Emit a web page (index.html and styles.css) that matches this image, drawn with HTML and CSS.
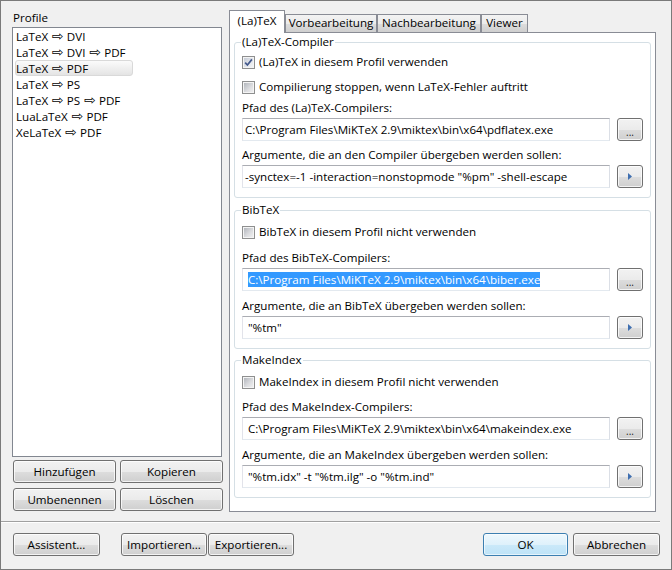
FILE: index.html
```html
<!DOCTYPE html>
<html lang="de">
<head>
<meta charset="utf-8">
<title>Profile</title>
<link rel="stylesheet" href="styles.css">
</head>
<body>
<div class="window">
  <div class="main">
    <div class="left">
      <div class="profile-label">Profile</div>
      <div class="listbox">
        <div class="list">
          <div class="item">LaTeX <span class="arr">⇨</span> DVI</div>
          <div class="item">LaTeX <span class="arr">⇨</span> DVI <span class="arr">⇨</span> PDF</div>
          <div class="item sel">LaTeX <span class="arr">⇨</span> PDF</div>
          <div class="item">LaTeX <span class="arr">⇨</span> PS</div>
          <div class="item">LaTeX <span class="arr">⇨</span> PS <span class="arr">⇨</span> PDF</div>
          <div class="item">LuaLaTeX <span class="arr">⇨</span> PDF</div>
          <div class="item">XeLaTeX <span class="arr">⇨</span> PDF</div>
        </div>
      </div>
      <div class="btngrid">
        <button class="btn">Hinzufügen</button>
        <button class="btn">Kopieren</button>
        <button class="btn">Umbenennen</button>
        <button class="btn">Löschen</button>
      </div>
    </div>
    <div class="tabwidget">
      <div class="tabbar">
        <div class="tab active t1">(La)TeX</div>
        <div class="tab t2">Vorbearbeitung</div>
        <div class="tab t3">Nachbearbeitung</div>
        <div class="tab t4">Viewer</div>
      </div>
      <div class="pane">
        <fieldset class="group g1">
          <legend>(La)TeX-Compiler</legend>
          <div class="cbrow first"><span class="cb checked"><svg viewBox="0 0 9 9" width="9" height="9"><path d="M1.2 4.6 L3.4 7 L7.9 1.4" fill="none" stroke="#43598c" stroke-width="1.7"/></svg></span>(La)TeX in diesem Profil verwenden</div>
          <div class="cbrow second"><span class="cb"></span>Compilierung stoppen, wenn LaTeX-Fehler auftritt</div>
          <div class="lbl l1">Pfad des (La)TeX-Compilers:</div>
          <div class="row"><div class="input tight">C:\Program Files\MiKTeX 2.9\miktex\bin\x64\pdflatex.exe</div><button class="btn sbtn"><span class="dots">...</span></button></div>
          <div class="lbl l2">Argumente, die an den Compiler übergeben werden sollen:</div>
          <div class="row"><div class="input tight">-synctex=-1 -interaction=nonstopmode "%pm" -shell-escape</div><button class="btn sbtn"><svg viewBox="0 0 4 7" width="4" height="7"><polygon points="0,0 4,3.5 0,7" fill="#3f6fb0"/></svg></button></div>
        </fieldset>
        <fieldset class="group g2">
          <legend>BibTeX</legend>
          <div class="cbrow first"><span class="cb"></span>BibTeX in diesem Profil nicht verwenden</div>
          <div class="lbl l1">Pfad des BibTeX-Compilers:</div>
          <div class="row"><div class="input"><span class="selected">C:\Program Files\MiKTeX 2.9\miktex\bin\x64\biber.exe</span></div><button class="btn sbtn"><span class="dots">...</span></button></div>
          <div class="lbl l2">Argumente, die an BibTeX übergeben werden sollen:</div>
          <div class="row"><div class="input">"%tm"</div><button class="btn sbtn"><svg viewBox="0 0 4 7" width="4" height="7"><polygon points="0,0 4,3.5 0,7" fill="#3f6fb0"/></svg></button></div>
        </fieldset>
        <fieldset class="group g3">
          <legend>MakeIndex</legend>
          <div class="cbrow first"><span class="cb"></span>MakeIndex in diesem Profil nicht verwenden</div>
          <div class="lbl l1">Pfad des MakeIndex-Compilers:</div>
          <div class="row"><div class="input">C:\Program Files\MiKTeX 2.9\miktex\bin\x64\makeindex.exe</div><button class="btn sbtn"><span class="dots">...</span></button></div>
          <div class="lbl l2">Argumente, die an MakeIndex übergeben werden sollen:</div>
          <div class="row"><div class="input">"%tm.idx" -t "%tm.ilg" -o "%tm.ind"</div><button class="btn sbtn"><svg viewBox="0 0 4 7" width="4" height="7"><polygon points="0,0 4,3.5 0,7" fill="#3f6fb0"/></svg></button></div>
        </fieldset>
      </div>
    </div>
  </div>
  <div class="sep"></div>
  <div class="footer">
    <button class="btn fb w87">Assistent...</button>
    <button class="btn fb w86 gapl">Importieren...</button>
    <button class="btn fb w86 gap1">Exportieren...</button>
    <div class="spacer"></div>
    <button class="btn fb w85 default">OK</button>
    <button class="btn fb w87 gap5">Abbrechen</button>
  </div>
</div>
</body>
</html>
```

FILE: styles.css
```css
* { box-sizing: border-box; }
html, body { margin: 0; padding: 0; }
body {
  width: 672px;
  height: 570px;
  overflow: hidden;
  background: #f0f0f0;
  font-family: "Open Sans", "DejaVu Sans", sans-serif;
  font-size: 11.6px;
  color: #000;
}
.window {
  width: 672px;
  height: 570px;
  border: 1px solid #7a7a7a;
  display: flex;
  flex-direction: column;
  background: #f0f0f0;
}
.main {
  height: 520px;
  display: flex;
  padding: 9px 0 9px 11px;
}
.left {
  width: 211px;
  display: flex;
  flex-direction: column;
}
.profile-label {
  height: 15px;
  line-height: 15px;
  margin-bottom: 2px;
  padding-left: 1px;
}
.listbox {
  flex: 1;
  width: 210px;
  background: #fff;
  border: 1px solid #828790;
  padding: 0 0 0 2px;
}
.list {
  display: inline-flex;
  flex-direction: column;
}
.item {
  height: 16px;
  line-height: 14px;
  border: 1px solid transparent;
  padding: 0 6px 0 0;
  white-space: nowrap;
}
.item.sel {
  border-color: #d9d9d9;
  border-radius: 3px;
  background: linear-gradient(#fbfbfb, #e4e4e4);
}
.arr {
  font-family: "DejaVu Sans", sans-serif;
  font-size: 14px;
  line-height: 14px;
  margin-left: 1px;
}
.btngrid {
  display: grid;
  grid-template-columns: 103px 103px;
  gap: 5px 4px;
  margin: 3px 0 1px 1px;
}
.btn {
  height: 23px;
  padding: 0;
  margin: 0;
  border: 1px solid #707070;
  border-radius: 3px;
  background: linear-gradient(#f2f2f2 0%, #ebebeb 50%, #dddddd 51%, #cfcfcf 100%);
  box-shadow: inset 0 0 0 1px rgba(255,255,255,0.75);
  font: inherit;
  color: #000;
  display: flex;
  align-items: center;
  justify-content: center;
}
.tabwidget {
  width: 427px;
  margin-left: 6px;
  display: flex;
  flex-direction: column;
}
.tabbar {
  height: 22px;
  display: flex;
  align-items: flex-end;
  position: relative;
  z-index: 1;
}
.tab {
  height: 18px;
  line-height: 16px;
  text-align: center;
  border: 1px solid #898c95;
  border-bottom: none;
  background: linear-gradient(#f3f3f3 0%, #ebebeb 50%, #dddddd 51%, #cfcfcf 100%);
}
.tab.active {
  height: 23px;
  margin-bottom: -1px;
  line-height: 20px;
  background: #fff;
}
.t1 { width: 56px; }
.t2 { width: 92px; }
.t3 { width: 104px; }
.t4 { width: 47px; }
.pane {
  flex: 1;
  background: #fff;
  border: 1px solid #898c95;
  padding: 1px 4px 0 4px;
}
.group {
  margin: 0;
  min-width: 0;
  border: 1px solid #d5dfe5;
  border-radius: 3px;
  padding: 0 7px 9px 7px;
}
.group legend {
  padding: 0 1px;
  margin-left: -1px;
  line-height: 16px;
}
.g2 { margin-top: 4px; }
.g3 { margin-top: 3px; }
.cbrow {
  height: 16px;
  line-height: 16px;
  display: flex;
  align-items: center;
  gap: 4px;
  white-space: nowrap;
}
.g1 .cbrow.first { margin-top: 4px; }
.g1 .cbrow.second { margin-top: 9px; }
.g2 .cbrow.first, .g3 .cbrow.first { margin-top: 6px; }
.cb {
  width: 13px;
  height: 13px;
  flex: none;
  border: 1px solid #8e8f8f;
  background: #f4f4f4;
  padding: 1px;
  position: relative;
}
.cb::before {
  content: "";
  display: block;
  width: 9px;
  height: 9px;
  background: linear-gradient(135deg, #b3b7bd 0%, #dcdde0 60%, #eeeeef 100%);
}
.cb.checked::before {
  background: linear-gradient(135deg, #c6ccd6 0%, #e4e7ec 60%, #f2f3f5 100%);
}
.cb svg {
  position: absolute;
  left: 1px;
  top: 1px;
}
.lbl {
  height: 16px;
  line-height: 16px;
  white-space: nowrap;
}
.g1 .l1 { margin-top: 5px; }
.g2 .l1 { margin-top: 10px; }
.g3 .l1 { margin-top: 9px; }
.g1 .l2 { margin-top: 6px; }
.g2 .l2, .g3 .l2 { margin-top: 7px; }
.row {
  display: flex;
  align-items: center;
  gap: 7px;
  margin-top: 2px;
}
.input {
  width: 368px;
  height: 23px;
  flex: none;
  border: 1px solid;
  border-color: #abadb3 #dbdfe6 #e3e9ef #e2e3ea;
  background: #fff;
  line-height: 21px;
  padding-left: 5px;
  white-space: nowrap;
  overflow: hidden;
}
.input.tight { padding-left: 2px; }
.selected { background: #3399ff; color: #fff; }
.sbtn {
  width: 26px;
  flex: none;
}
.dots {
  font-size: 10px;
  letter-spacing: 0;
  line-height: 10px;
  padding-top: 4px;
  color: #222;
}
.sep {
  height: 2px;
  margin-right: 11px;
  border-top: 1px solid #a0a0a0;
  border-bottom: 1px solid #fff;
}
.footer {
  height: 46px;
  display: flex;
  align-items: flex-start;
  padding: 10px 11px 13px 12px;
}
.fb { flex: none; }
.w85 { width: 85px; }
.w86 { width: 86px; }
.w87 { width: 87px; }
.gapl { margin-left: 21px; }
.gap1 { margin-left: 1px; }
.gap5 { margin-left: 5px; }
.spacer { flex: 1; }
.btn.default {
  border-color: #3c7fb1;
  background: linear-gradient(#eef8fd 0%, #dff1fb 50%, #cbe9f9 51%, #bee3f7 100%);
  box-shadow: inset 0 0 0 1px rgba(255,255,255,0.6);
}
```
